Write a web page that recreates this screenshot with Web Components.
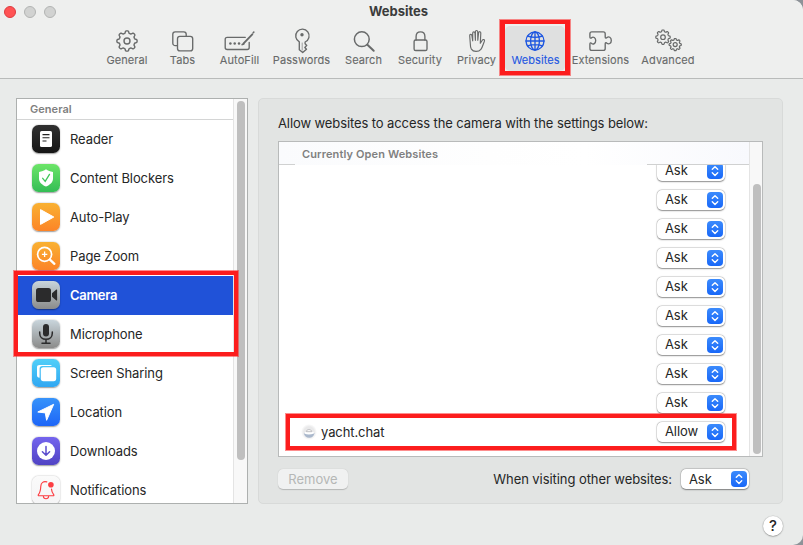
<!DOCTYPE html>
<html lang="en"><head><meta charset="utf-8"><title>Websites</title>
<style>
html,body{margin:0;height:545px;overflow:hidden;background:#8d9298}
body{font-family:Inter,"Liberation Sans",sans-serif;color:#252626}
</style></head><body><settings-window></settings-window>
<script>
const def=(name,html,setup)=>customElements.define(name,class extends HTMLElement{
 connectedCallback(){ if(this.shadowRoot)return; const t=document.createElement('template');
  t.innerHTML=html; this.attachShadow({mode:'open'}).append(t.content.cloneNode(true)); if(setup)setup(this,this.shadowRoot);}
});
function gear(cx,cy,R,r,n,hole,sw){
 let p=[];const N=n*16;
 for(let i=0;i<N;i++){const a=i/N*2*Math.PI-Math.PI/2;let c=Math.cos(n*(a+Math.PI/2));c=Math.tanh(c*2.4)/Math.tanh(2.4);
  const q=(R+r)/2+(R-r)/2*c;p.push((cx+q*Math.cos(a)).toFixed(2)+' '+(cy+q*Math.sin(a)).toFixed(2));}
 return `<path d="M${p.join('L')}Z" stroke-width="${sw}"/><circle cx="${cx}" cy="${cy}" r="${hole}" stroke-width="${sw}"/>`;
}
const TOOL={
general:gear(16,15,10.1,7.9,8,3,1.4),
tabs:'<path d="M11.3 19.6H9.2a2.4 2.4 0 0 1-2.4-2.4V8.2a2.4 2.4 0 0 1 2.4-2.4h8.6a2.4 2.4 0 0 1 2.4 2.4v1.9"/><rect x="11.5" y="10.3" width="15.2" height="14.6" rx="2.4"/>',
autofill:'<path d="M22.3 11.3H4.2a2 2 0 0 0-2 2v8.2a2 2 0 0 0 2 2h20a2 2 0 0 0 2-2v-5.2"/><path d="M20.6 17.3L29.3 8.3" stroke-width="1.9"/><path d="M19.2 18.6l1.6-.7M30.2 6.7l.6-.6" stroke-width="1.6"/><g fill="currentColor" stroke="none"><circle cx="7.4" cy="17.6" r="1.25"/><circle cx="11.7" cy="17.6" r="1.25"/><circle cx="16" cy="17.6" r="1.25"/></g>',
passwords:'<path d="M14.300 15.800a6.700 6.700 0 1 1 5.800.2v1.700l1.700 1.700-2 2.100 1.700 1.700-3.800 3.400-3.400-2.800z"/><circle cx="17" cy="8.800" r="1.700" fill="currentColor" stroke="none"/><path d="M17.200 17v7" stroke-width=".6"/>',
search:'<circle cx="14.8" cy="13.2" r="7.4" stroke-width="1.5"/><path d="M20.4 18.7l6.3 6" stroke-width="2"/>',
security:'<rect x="10.1" y="14" width="12.9" height="10.5" rx="1.6"/><path d="M12.1 14v-3.6c0-6 8.8-6 8.8 0V14"/>',
privacy:'<path d="M10.300 17.800L9.700 9.700c-.1-1.600 2-1.800 2.200-.2l.8 5.300V7.100c0-1.700 2.200-1.700 2.300 0l.4 7.200V5.800c0-1.700 2.300-1.700 2.300 0l.1 8.500.8-7.500c.2-1.600 2.300-1.400 2.200.2l-.5 10.300 2-3.100c1-1.400 2.700-.5 2.100 1-1.200 2.600-1.800 6-3.500 8.100-2.400 2.900-7.600 2.800-9.500-.2-.9-1.600-1.100-3.500-1.100-5.300z" stroke-width="1.150"/>',
websites:'<circle cx="16" cy="15" r="9"/><ellipse cx="16" cy="15" rx="4.4" ry="9"/><path d="M16 6v18M7 15h18M8.500 10q7.500 2.700 15 0M8.500 20q7.500-2.700 15 0"/>',
extensions:'<path d="M5.900 11V7.700q0-1.900 1.900-1.900H19.300q1.900 0 1.900 1.900V11c0 1.300 1.100 1.300 1.800.5 1.700-1.400 4.300-.2 4.300 2.900s-2.600 4.300-4.300 2.900c-.7-.8-1.800-.8-1.800.5v4.700q0 1.900-1.900 1.900H7.800q-1.900 0-1.900-1.900v-4.600c0-1.300 1.100-1.200 1.700-.5 1.700 1.400 4.100.1 4.100-2.800s-2.400-4.300-4.100-2.900c-.6.7-1.700.6-1.700-.7z"/>',
advanced:gear(11,11.200,7.200,5.600,8,2.300,1.200)+gear(23.200,18.600,6.100,4.700,8,2,1.200)
};
def('tool-item',`<style>:host{display:flex;flex-direction:column;align-items:center;width:var(--w);height:45px;border-radius:5px;color:#686a6a;box-sizing:border-box}
:host([selected]){background:#dfe0e0;color:#1e57e0}svg{width:32px;height:30px;fill:none;stroke:currentColor;stroke-width:1.35;stroke-linecap:round;stroke-linejoin:round;display:block;flex:none}
span{font-size:11px;line-height:14px;margin-top:-3px;margin-left:1px;white-space:nowrap;letter-spacing:.08px;-webkit-text-stroke:.1px currentColor}</style><svg></svg><span><slot></slot></span>`,
(h,s)=>s.querySelector('svg').innerHTML=TOOL[h.getAttribute('icon')]);
def('title-bar',`<style>:host{display:block;height:78px;background:#eeefee;border-bottom:1px solid #b9bbba;box-sizing:content-box;flex:none}
.top{display:grid;grid-template-columns:1fr auto 1fr;height:26px;align-items:center}.dots{display:flex;gap:8px;padding-left:4px}
i{width:12px;height:12px;border-radius:50%;box-sizing:border-box;background:#d1d2d1;border:1px solid #b2b4b3}i.c{background:#ff5354;border-color:#de3b3f}
b{font-size:13px;font-weight:700;line-height:16px;color:#3b3c3c;padding-bottom:4px;margin-right:6px}.dots{padding-bottom:2px}.items{display:flex;padding-left:99px}</style>
<div class="top"><div class="dots"><i class="c"></i><i></i><i></i></div><b>Websites</b><span></span></div><div class="items"><slot></slot></div>`);
const APP={
reader:['#303030','#151515','<rect x="8" y="6" width="12" height="16" rx="1.600" fill="#fff"/><path d="M10.500 9.600h7M10.500 12.800h7M10.500 16h4" stroke="#222" stroke-width="1.100"/>'],
shield:['#6ce568','#34bd55','<path d="M14 5.200c2 1.500 4.200 2.300 7 2.700v6.500c0 4-3.300 6.500-7 8-3.700-1.500-7-4-7-8V7.900c2.800-.4 5-1.200 7-2.700z" fill="#fff"/><path d="M10.700 14.300l2.500 3 4.300-6.900" fill="none" stroke="#3fc65a" stroke-width="1.300" stroke-linecap="round"/>'],
play:['#f9b132','#fc8427','<path d="M8.500 6.600v14.800L21.800 14z" fill="#fff" stroke="#fff" stroke-width="1" stroke-linejoin="round"/>'],
zoom:['#f9b132','#fc8427','<circle cx="12.600" cy="12.300" r="7" fill="none" stroke="#fff" stroke-width="1.700"/><path d="M17.900 17.600l4.500 4.200" stroke="#fff" stroke-width="2.300" stroke-linecap="round"/><path d="M9.900 12.300h5.400M12.600 9.600V15" stroke="#fff" stroke-width="1.300"/>'],
camera:['#c9d5dc','#8b8b8a','<rect x="4" y="7" width="15" height="14" rx="2.600" fill="#2b2b2c"/><path d="M20 12.200l4.300-3.600q.8-.5.800.4v10q0 .9-.8.4L20 15.800z" fill="#2b2b2c"/>'],
mic:['#c9d5dc','#8b8b8a','<rect x="11" y="4" width="6" height="12.500" rx="3" fill="#2b2b2c"/><path d="M7.700 12v1.200c0 3.700 2.600 6.100 6.300 6.100s6.300-2.400 6.300-6.100V12M14 19.300v3.700M10 23.300h8" fill="none" stroke="#2b2b2c" stroke-width="1.500" stroke-linecap="round"/>'],
screens:['#51cff8','#30a7f2','<path d="M7.600 18.800c-1.800-.2-2.600-1-2.600-2.600V8.400C5 6.700 5.900 6 7.500 6h10c1.200 0 2 .3 2.400 1.100H10.200c-1.700 0-2.600.9-2.600 2.600z" fill="#fff"/><rect x="8.800" y="8.200" width="15.400" height="14" rx="2.600" fill="#fff"/>'],
location:['#3793fa','#1d65f7','<path d="M5.800 14L21.700 6.300 14.600 22.300 13.300 14.900z" fill="#fff" stroke="#fff" stroke-width="1" stroke-linejoin="round"/>'],
download:['#7464ee','#5043c4','<circle cx="14" cy="14" r="9" fill="#fff"/><path d="M14 9.500v8.600M10.400 14.800l3.600 3.500 3.600-3.500" fill="none" stroke="#5b4dcd" stroke-width="1.500" stroke-linecap="round" stroke-linejoin="round"/>'],
bell:['#fafafa','#f5f5f6','<g fill="none" stroke="#fc3d42" stroke-width="1.150" stroke-linecap="round" stroke-linejoin="round"><path d="M14.800 5.900c-3.400-1-5.800.9-6 4.300-.2 4.500-.7 6.400-2.400 8.500-.4.500-.2 1 .5 1h14.300c.7 0 .9-.5.500-1-1.300-1.600-2-3-2.200-5.600M11.400 20.500c.2 3 5 3 5.200 0"/></g><circle cx="18.900" cy="8.700" r="2.800" fill="#fc3d42"/>']
};
def('side-row',`<style>:host{display:flex;box-sizing:border-box;align-items:center;height:39px;padding:0 0 1px 15px;gap:10px;font-size:13px;letter-spacing:-.1px;white-space:nowrap;flex:none}
:host([selected]){background:#2052d8;color:#fff;font-weight:600;letter-spacing:-.3px}.i{width:28px;height:28px;border-radius:6.500px;box-shadow:0 .5px 1.500px #0006;flex:none}svg{display:block}</style><div class="i"><svg width="28" height="28"></svg></div><span><slot></slot></span>`,
(h,s)=>{const[a,b,g]=APP[h.getAttribute('icon')];s.querySelector('.i').style.background=`linear-gradient(${a},${b})`;s.querySelector('svg').innerHTML=g;});
def('scroll-bar',`<style>:host{display:block;box-sizing:border-box;width:var(--sw,14px);background:#f8f8f8;border-left:1px solid #e4e4e4;padding:var(--top) 0 0 3px;flex:none}i{display:block;width:8px;height:var(--len);border-radius:4px;background:#bfbfbf}</style><i></i>`);
def('side-list',`<style>:host{display:flex;box-sizing:border-box;width:232px;height:406px;border:1px solid #adb0af;background:#fff;overflow:hidden}
.l{width:216px;display:flex;flex-direction:column;overflow:hidden}h2{margin:0;height:20px;flex:none;border-bottom:1px solid #d4d5d5;font-size:11px;line-height:21px;font-weight:600;color:#7f8080;padding-left:13px;letter-spacing:.05px}scroll-bar{--top:2px;--len:359px}</style>
<div class="l"><h2>General</h2><slot></slot></div><scroll-bar></scroll-bar>`);
def('pop-up',`<style>:host{display:flex;box-sizing:border-box;width:68px;height:20px;border-radius:5px;background:#fff;box-shadow:0 0 0 .5px #0002,0 .5px 1.500px #0006;align-items:center;justify-content:space-between;padding:0 2px 0 8px;font-size:13px;letter-spacing:-.1px;flex:none}
span{margin-top:-1px}svg{width:16px;height:16px;border-radius:4px;background:linear-gradient(#3c8bfc,#1968f8)}</style><span><slot></slot></span><svg><path d="M5.300 6.300L8 3.700l2.700 2.600M5.300 9.800L8 12.400l2.700-2.600" fill="none" stroke="#fff" stroke-width="1.400" stroke-linecap="round" stroke-linejoin="round"/></svg>`);
def('site-row',`<style>:host{display:flex;height:29px;align-items:center;justify-content:space-between;padding:0 24px 0 22px;flex:none;font-size:13px;letter-spacing:-.1px}.n{display:flex;align-items:center;gap:4px}</style><div class="n"><slot name="icon"></slot><slot></slot></div><pop-up></pop-up>`,
(h,s)=>s.querySelector('pop-up').textContent=h.getAttribute('value'));
def('site-icon',`<style>:host{display:block;width:16px;height:16px}svg{display:block}</style><svg width="16" height="16"><defs><radialGradient id="g"><stop offset=".65" stop-color="#e9e9ea"/><stop offset="1" stop-color="#fff"/></radialGradient></defs><circle cx="8" cy="8" r="8" fill="url(#g)"/><path d="M2.800 9h10.700q-.8 4.700-5.300 4.700T2.800 9z" fill="#aab8cc"/><path d="M3.200 9.600q4.800 2 9.800-.2L12.500 7.800h-8z" fill="#fff"/><path d="M5.300 7.700c0-2.600 5-3.100 5.500 0z" fill="#fafafa" stroke="#b2b3b7" stroke-width=".8"/></svg>`);
def('site-table',`<style>:host{display:flex;box-sizing:border-box;width:485px;height:316px;border:1px solid #b8baba;background:#fff;overflow:hidden}
.l{width:470px;flex:none;display:flex;flex-direction:column;overflow:hidden}h2{margin:0;height:23px;box-sizing:border-box;flex:none;font-size:11px;line-height:25px;font-weight:600;color:#7f8080;padding-left:23px;letter-spacing:.12px;
background:linear-gradient(#d0d1d1,#d0d1d1) 0 100%/16px 1px no-repeat,linear-gradient(#d0d1d1,#d0d1d1) 100% 100%/102px 1px no-repeat,linear-gradient(90deg,#fafbfd,#fefefe 45%,#fff 65%,#f8f9fd)}
.rows{display:flex;flex-direction:column;margin-top:-9px;clip-path:inset(9px 0 0 0)}scroll-bar{--sw:13px;--top:42px;--len:270px}</style><div class="l"><h2>Currently Open Websites</h2><div class="rows"><slot></slot></div></div><scroll-bar></scroll-bar>`);
def('site-panel',`<style>:host{display:flex;flex-direction:column;box-sizing:border-box;width:525px;height:406px;border:1px solid #d8dad9;border-radius:5px;background:#e2e4e3;padding:0 19px;font-size:13px}
p{margin:0;height:42px;line-height:49px;letter-spacing:-.1px;white-space:nowrap}.f{display:flex;align-items:center;justify-content:space-between;padding:12px 14px 0 0}.d{display:flex;align-items:center;gap:9px}.d>span{letter-spacing:-.07px;margin-top:-1px}
button{font:inherit;border:0;padding:0 0 1px;width:70px;height:20px;border-radius:5px;background:#f0f1f1;color:#b5b7b6;box-shadow:0 .5px 1px #0003}</style>
<p>Allow websites to access the camera with the settings below:</p><slot></slot><div class="f"><button>Remove</button><div class="d"><span>When visiting other websites:</span><pop-up>Ask</pop-up></div></div>`);
def('help-button',`<style>:host{display:block;width:20px;height:20px;border-radius:50%;background:#fff;box-shadow:0 0 0 .5px #0001,0 .5px 1.500px #0006;text-align:center;font-size:15px;line-height:20px;font-weight:500}</style>?`);
def('red-frame',`<style>:host{position:absolute;box-sizing:border-box;border:5px solid #fc1d1d;pointer-events:none}</style>`);
const tools=[['general','General',55],['tabs','Tabs',56],['autofill','AutoFill',58],['passwords','Passwords',66],['search','Search',58],['security','Security',55],['privacy','Privacy',58],['websites','Websites',60],['extensions','Extensions',70],['advanced','Advanced',65]];
const rows=[['reader','Reader'],['shield','Content Blockers'],['play','Auto-Play'],['zoom','Page Zoom'],['camera','Camera'],['mic','Microphone'],['screens','Screen Sharing'],['location','Location'],['download','Downloads'],['bell','Notifications']];
def('settings-window',`<style>:host{display:flex;flex-direction:column;position:relative;width:803px;height:545px;background:#e9ebea;border-radius:0 10px 10px 0;overflow:hidden}
.m{display:flex;gap:10px;padding:19px 0 0 16px}.b{display:flex;justify-content:flex-end;padding:12px 20px 0 0}
.t{left:500px;top:20px;width:70px;height:55px;border-width:4px 5px}.s{left:14px;top:271px;width:224px;height:85px;border-width:4px}.y{left:286px;top:414px;width:450px;height:36px;border-width:4px}red-frame{outline:1px solid #fc1d1d80}</style>
<title-bar>${tools.map(([i,n,w])=>`<tool-item icon="${i}" style="--w:${w}px" ${i=='websites'?'selected':''}>${n}</tool-item>`).join('')}</title-bar>
<div class="m"><side-list>${rows.map(([i,n])=>`<side-row icon="${i}" ${i=='camera'?'selected':''}>${n}</side-row>`).join('')}</side-list>
<site-panel><site-table>${'<site-row value="Ask"></site-row>'.repeat(9)}<site-row value="Allow"><site-icon slot="icon"></site-icon>yacht.chat</site-row></site-table></site-panel></div>
<div class="b"><help-button></help-button></div><red-frame class="t"></red-frame><red-frame class="s"></red-frame><red-frame class="y"></red-frame>`);
</script></body></html>
